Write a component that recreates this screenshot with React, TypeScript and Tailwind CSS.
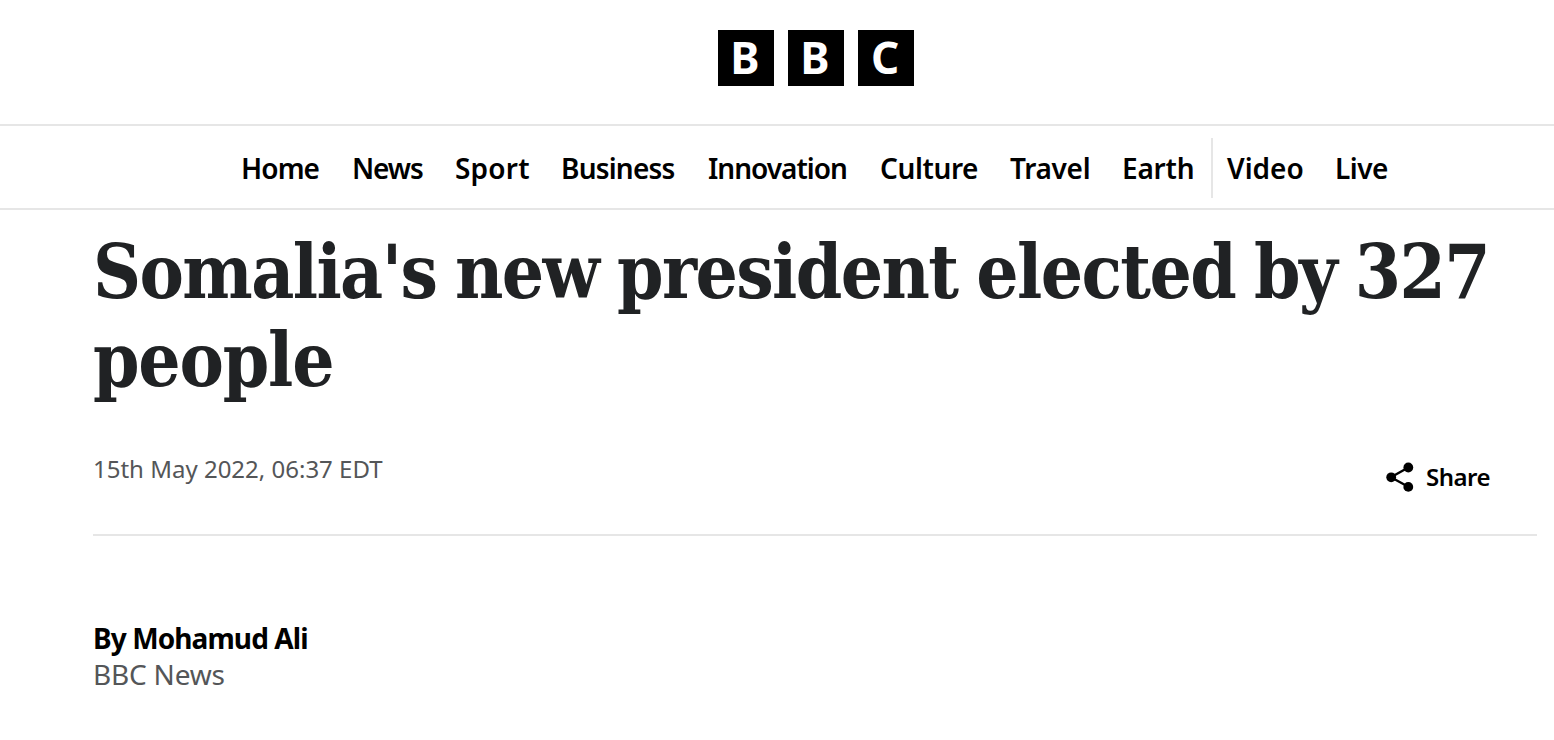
const primaryLinks = [
  { label: 'Home', className: 'w-[79px] tracking-[-0.9px]' },
  { label: 'News', className: 'w-[71px] tracking-[-1.1px]' },
  { label: 'Sport', className: 'w-[74px] tracking-[0.2px]' },
  { label: 'Business', className: 'w-[115px] tracking-[-0.8px]' },
  { label: 'Innovation', className: 'w-[140px] tracking-[-1px]' },
  { label: 'Culture', className: 'w-[98px] tracking-[-0.4px]' },
  { label: 'Travel', className: 'w-[80px] tracking-[-0.3px]' },
  { label: 'Earth', className: 'w-[72px] tracking-[-0.2px]' },
];

const secondaryLinks = [
  { label: 'Video', className: 'w-[76px]' },
  { label: 'Live', className: 'w-[54px] tracking-[-0.5px]' },
];

function Logo() {
  return (
    <a href="#" aria-label="BBC" className="flex gap-[14px]">
      {['B', 'B', 'C'].map((letter, i) => (
        <span
          key={i}
          className="flex h-14 w-14 items-center justify-center bg-black pr-0.5 pb-0.5 text-[44px] leading-none font-bold text-white"
        >
          {letter}
        </span>
      ))}
    </a>
  );
}

function NavLink({ label, className }: { label: string; className: string }) {
  return (
    <li className={`${className} whitespace-nowrap`}>
      <a href="#">{label}</a>
    </li>
  );
}

function Header() {
  return (
    <header>
      <div className="flex h-[124px] justify-center pt-[30px] pl-[78px]">
        <Logo />
      </div>
      <nav className="flex h-[86px] items-center border-y-2 border-[#e6e6e6] pt-0.5 pl-[241px] text-[28px] leading-9 font-semibold text-black">
        <ul className="flex gap-8">
          {primaryLinks.map((link) => (
            <NavLink key={link.label} {...link} />
          ))}
        </ul>
        <div className="ml-[17px] h-[60px] w-0.5 bg-[#e6e6e6]" />
        <ul className="ml-3.5 flex gap-8">
          {secondaryLinks.map((link) => (
            <NavLink key={link.label} {...link} />
          ))}
        </ul>
      </nav>
    </header>
  );
}

function ShareIcon() {
  return (
    <svg width="28" height="30" viewBox="0 0 28 30" fill="currentColor" aria-hidden="true">
      <path d="M22.3 5.5 5 15.3l17.3 9.5" fill="none" stroke="currentColor" strokeWidth="2.4" />
      <circle cx="22.3" cy="5.5" r="4.9" />
      <circle cx="5.2" cy="15.3" r="4.9" />
      <circle cx="22.3" cy="24.9" r="4.9" />
    </svg>
  );
}

export default function App() {
  return (
    <div className="min-h-[740px] w-full overflow-hidden bg-white font-['Noto_Sans',sans-serif]">
      <Header />
      <main className="pr-[17px] pl-[93px]">
        <h1 className="pt-[18px] font-['DejaVu_Serif_Condensed','DejaVu_Serif',serif] text-[74px] leading-[88px] font-bold tracking-[-1.6px] text-[#202224] [word-spacing:-2.8px]">
          Somalia's new president elected by 327{' '}
          <span className="tracking-[-1.2px]">people</span>
        </h1>
        <div className="flex h-[132px] justify-between border-b-2 border-[#e6e6e6] pt-[49px] pr-[46px]">
          <time className="text-2xl text-[#545658]">15th May 2022, 06:37 EDT</time>
          <button className="flex h-10 items-center gap-3 pt-2 text-2xl font-semibold text-black">
            <ShareIcon />
            <span className="w-[65px] text-left tracking-[-0.5px]">Share</span>
          </button>
        </div>
        <div className="pt-[84px] text-[28px] leading-9">
          <p className="font-bold tracking-[-0.9px] text-black">By Mohamud Ali</p>
          <p className="tracking-[-0.2px] text-[#545658]">BBC News</p>
        </div>
      </main>
    </div>
  );
}
